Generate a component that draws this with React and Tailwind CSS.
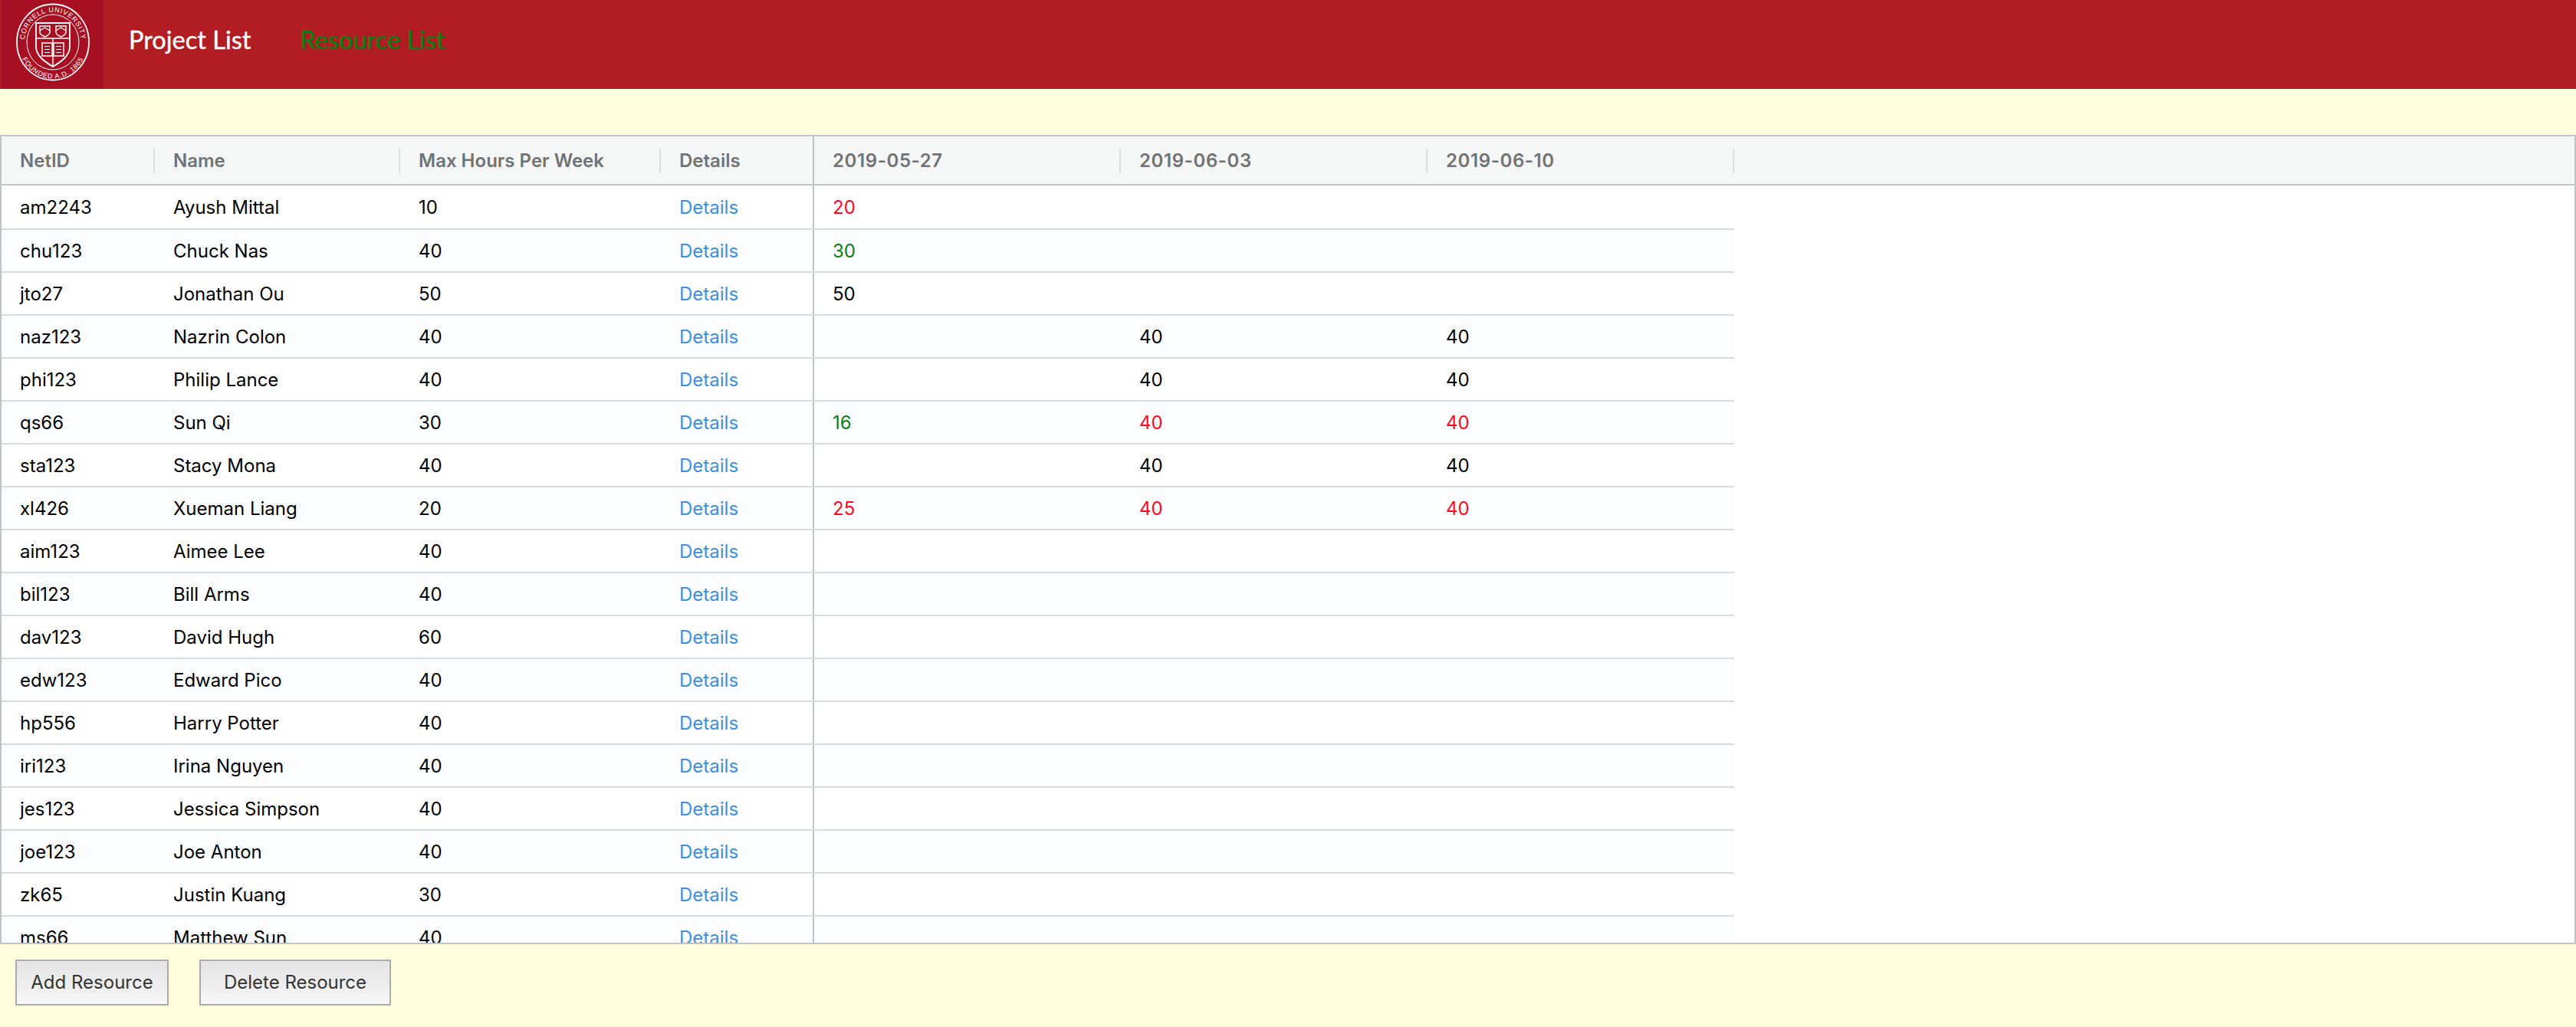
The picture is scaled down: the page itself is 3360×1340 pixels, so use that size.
import React from 'react';

const dates = ['2019-05-27', '2019-06-03', '2019-06-10'];

const R = 'text-[#fb0a1e]';
const G = 'text-[#0a8012]';

const resources = [
    { id: 'am2243', name: 'Ayush Mittal', max: 10, hours: [[20, R]] },
    { id: 'chu123', name: 'Chuck Nas', max: 40, hours: [[30, G]] },
    { id: 'jto27', name: 'Jonathan Ou', max: 50, hours: [[50]] },
    { id: 'naz123', name: 'Nazrin Colon', max: 40, hours: [[], [40], [40]] },
    { id: 'phi123', name: 'Philip Lance', max: 40, hours: [[], [40], [40]] },
    { id: 'qs66', name: 'Sun Qi', max: 30, hours: [[16, G], [40, R], [40, R]] },
    { id: 'sta123', name: 'Stacy Mona', max: 40, hours: [[], [40], [40]] },
    { id: 'xl426', name: 'Xueman Liang', max: 20, hours: [[25, R], [40, R], [40, R]] },
    { id: 'aim123', name: 'Aimee Lee', max: 40, hours: [] },
    { id: 'bil123', name: 'Bill Arms', max: 40, hours: [] },
    { id: 'dav123', name: 'David Hugh', max: 60, hours: [] },
    { id: 'edw123', name: 'Edward Pico', max: 40, hours: [] },
    { id: 'hp556', name: 'Harry Potter', max: 40, hours: [] },
    { id: 'iri123', name: 'Irina Nguyen', max: 40, hours: [] },
    { id: 'jes123', name: 'Jessica Simpson', max: 40, hours: [] },
    { id: 'joe123', name: 'Joe Anton', max: 40, hours: [] },
    { id: 'zk65', name: 'Justin Kuang', max: 30, hours: [] },
    { id: 'ms66', name: 'Matthew Sun', max: 40, hours: [] },
];

const Seal = () => (
    <svg width="100" height="104" viewBox="0 0 100 104" className="text-white" fill="none" stroke="currentColor">
        <defs>
            <path id="sealTop" d="M 14.3 62 A 37 39 0 1 1 85.7 62" />
            <path id="sealBottom" d="M 5 52 A 45 47.5 0 0 0 95 52" />
        </defs>
        <ellipse cx="50" cy="52" rx="47" ry="49.5" strokeWidth="1.8" />
        <ellipse cx="50" cy="52" rx="34" ry="36" strokeWidth="1" />
        <text fill="currentColor" stroke="none" fontSize="9" letterSpacing="0.8" fontFamily="'Liberation Sans', sans-serif">
            <textPath href="#sealTop" startOffset="50%" textAnchor="middle">CORNELL UNIVERSITY</textPath>
        </text>
        <text fill="currentColor" stroke="none" fontSize="9" letterSpacing="0.8" fontFamily="'Liberation Sans', sans-serif">
            <textPath href="#sealBottom" startOffset="50%" textAnchor="middle">FOUNDED A.D. 1865</textPath>
        </text>
        <path d="M 28 27 H 72 V 58 C 72 70 60 78 50 84 C 40 78 28 70 28 58 Z" strokeWidth="1.8" />
        <path d="M 28 47 H 72 M 50 47 V 84" strokeWidth="1.4" />
        <path d="M 33 31 H 46 V 39 C 46 42 42 44 39.5 45 C 37 44 33 42 33 39 Z" strokeWidth="1.4" />
        <path d="M 54 31 H 67 V 39 C 67 42 63 44 60.5 45 C 58 44 54 42 54 39 Z" strokeWidth="1.4" />
        <path d="M 33 37 L 39.5 33 L 46 37 M 54 37 L 60.5 33 L 67 37" strokeWidth="1.2" />
        <path d="M 36 53 H 49 V 70 H 36 Z M 51 53 H 64 V 70 H 51 Z" strokeWidth="1.4" />
        <path d="M 39 57.5 H 46 M 39 61.5 H 46 M 39 65.5 H 46 M 54 57.5 H 61 M 54 61.5 H 61 M 54 65.5 H 61" strokeWidth="1.1" />
    </svg>
);

const HeaderCell = ({ width, className = '', children, sep = true }) => (
    <div className={`${width} h-full shrink-0 relative flex items-center pl-6 pt-0.5 text-[24px] font-semibold text-[#717373] ${className}`}>
        {children}
        {sep && <span className="absolute right-0 top-4 h-8 w-0.5 bg-[#dcdfe2]" />}
    </div>
);

const Cell = ({ width, className = '', children }) => (
    <div className={`${width} h-full shrink-0 flex items-center pl-6 pt-0.5 text-[24px] ${className}`}>{children}</div>
);

const App = () => {
    return (
        <div className="w-[3360px] h-[1340px] overflow-hidden flex flex-col bg-[#ffffe0] font-['Inter',sans-serif] text-black">
            <nav className="h-[116px] shrink-0 flex items-center bg-[#b11d23]">
                <div className="ml-0.5 w-[133px] h-full bg-[#a70f22] flex items-center justify-center pb-1.5">
                    <Seal />
                </div>
                <div className="flex items-center font-['Lato',sans-serif] text-[32.5px] [-webkit-text-stroke:0.4px] pb-3">
                    <a className="ml-[33px] text-white">Project List</a>
                    <a className="ml-[64px] text-[#0a8012]">Resource List</a>
                </div>
            </nav>

            <div className="mt-[60px] h-[1056px] shrink-0 overflow-hidden border-2 border-[#bdc3c7] bg-white">
                <div className="h-[64px] flex border-b-2 border-[#bdc3c7] bg-[#f5f7f7]">
                    <HeaderCell width="w-[200px]">NetID</HeaderCell>
                    <HeaderCell width="w-[320px]">Name</HeaderCell>
                    <HeaderCell width="w-[340px]">Max Hours Per Week</HeaderCell>
                    <HeaderCell width="w-[198px]" sep={false}>Details</HeaderCell>
                    <div className="w-0.5 h-full bg-[#bdc3c7]" />
                    {dates.map((d) => (
                        <HeaderCell key={d} width="w-[400px]" className="tracking-[0.6px]">{d}</HeaderCell>
                    ))}
                </div>
                {resources.map((r, i) => (
                    <div
                        key={r.id}
                        className={`w-[2260px] flex border-b-2 border-[#d9dcde] ${i === 0 ? 'h-[58px]' : 'h-[56px]'} ${i % 2 ? 'bg-[#fcfdfe]' : 'bg-white'}`}
                    >
                        <Cell width="w-[200px]">{r.id}</Cell>
                        <Cell width="w-[320px]">{r.name}</Cell>
                        <Cell width="w-[340px]">{r.max}</Cell>
                        <Cell width="w-[198px]" className="text-[#3a8fde]">Details</Cell>
                        <div className="w-0.5 h-full bg-[#bdc3c7]" />
                        {[0, 1, 2].map((c) => (
                            <Cell key={c} width="w-[400px]" className={r.hours[c]?.[1] || ''}>
                                {r.hours[c]?.[0]}
                            </Cell>
                        ))}
                    </div>
                ))}
            </div>

            <div className="mt-5 ml-5 flex gap-10 text-[24px] text-[#333]">
                <button className="w-[200px] h-[60px] border-2 border-[#ababab] bg-gradient-to-b from-[#e3e3e3] to-[#f6f6f6]">Add Resource</button>
                <button className="w-[250px] h-[60px] border-2 border-[#ababab] bg-gradient-to-b from-[#e3e3e3] to-[#f6f6f6]">Delete Resource</button>
            </div>
        </div>
    );
};

export default App;
